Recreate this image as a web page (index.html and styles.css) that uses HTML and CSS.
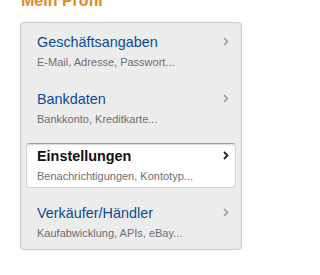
FILE: index.html
```html
<!DOCTYPE html>
<html>
<head>
<meta charset="utf-8">
<link rel="stylesheet" href="styles.css">
</head>
<body>
<div class="page">
  <h2 class="heading">Mein Profil</h2>
  <div class="panel">
    <div class="item">
      <div class="row">
        <span class="title">Geschäftsangaben</span>
        <svg class="chev" width="6" height="9" viewBox="0 0 6 9"><polyline points="1,1 4.5,4.5 1,8" fill="none" stroke="#9a9a9a" stroke-width="1.6"/></svg>
      </div>
      <div class="sub">E-Mail, Adresse, Passwort...</div>
    </div>
    <div class="item">
      <div class="row">
        <span class="title">Bankdaten</span>
        <svg class="chev" width="6" height="9" viewBox="0 0 6 9"><polyline points="1,1 4.5,4.5 1,8" fill="none" stroke="#9a9a9a" stroke-width="1.6"/></svg>
      </div>
      <div class="sub">Bankkonto, Kreditkarte...</div>
    </div>
    <div class="item active">
      <div class="row">
        <span class="title">Einstellungen</span>
        <svg class="chev" width="6" height="9" viewBox="0 0 6 9"><polyline points="1,1 4.5,4.5 1,8" fill="none" stroke="#222" stroke-width="1.8"/></svg>
      </div>
      <div class="sub">Benachrichtigungen, Kontotyp...</div>
    </div>
    <div class="item">
      <div class="row">
        <span class="title">Verkäufer/Händler</span>
        <svg class="chev" width="6" height="9" viewBox="0 0 6 9"><polyline points="1,1 4.5,4.5 1,8" fill="none" stroke="#9a9a9a" stroke-width="1.6"/></svg>
      </div>
      <div class="sub">Kaufabwicklung, APIs, eBay...</div>
    </div>
  </div>
</div>
</body>
</html>
```
FILE: styles.css
```css
html, body {
  margin: 0;
  padding: 0;
  background: #ffffff;
}
body {
  font-family: "Liberation Sans", Arial, sans-serif;
}
.page {
  padding-left: 20px;
  overflow: hidden;
  height: 275px;
}
.heading {
  margin: -7px 0 13px 1px;
  font-size: 16px;
  line-height: 16px;
  font-weight: bold;
  color: #e08a1c;
}
.panel {
  box-sizing: border-box;
  width: 222px;
  border: 1px solid #c8c8c8;
  border-radius: 4px;
  background: #ececec;
  padding: 6px 5px 4px 5px;
  display: flex;
  flex-direction: column;
  gap: 12px;
}
.item {
  box-sizing: border-box;
  height: 45px;
  padding: 3px 6px 0 10px;
  border: 1px solid transparent;
  border-radius: 4px;
}
.item.active {
  background: #ffffff;
  border-color: #d4d4d4;
  border-top-color: #9c9c9c;
  box-shadow: inset 0 1px 1px rgba(0,0,0,0.15);
}
.row {
  display: flex;
  align-items: center;
  justify-content: space-between;
  height: 17px;
}
.title {
  font-size: 14.4px;
  color: #0b4a96;
}
.active .title {
  color: #111;
  font-weight: bold;
}
.chev {
  display: block;
}
.sub {
  margin-top: 6px;
  font-size: 11px;
  line-height: 13px;
  color: #6e6e6e;
}
```
